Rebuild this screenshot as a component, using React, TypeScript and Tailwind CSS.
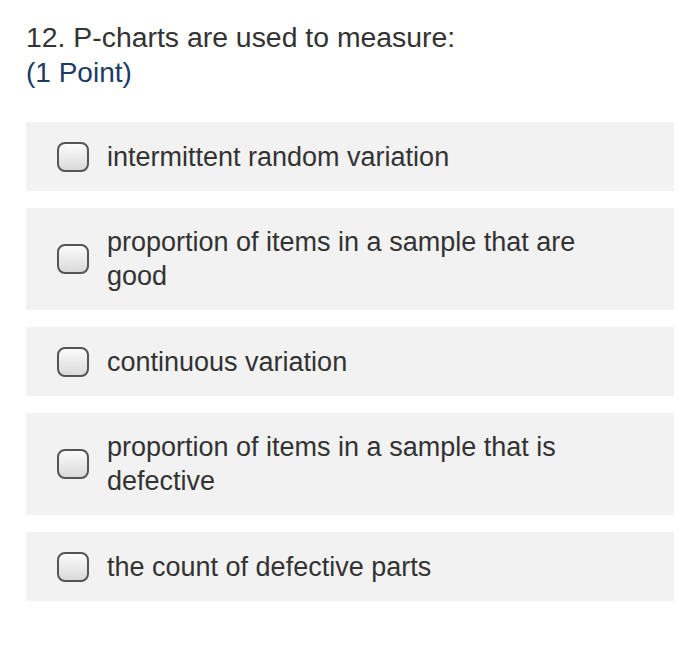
import React from "react";

const options = [
  "intermittent random variation",
  "proportion of items in a sample that are good",
  "continuous variation",
  "proportion of items in a sample that is defective",
  "the count of defective parts",
];

function Box() {
  return (
    <span className="shrink-0 w-[32px] h-[30px] rounded-[8px] border-2 border-[#555] bg-gradient-to-b from-[#fbfbfb] to-[#dadada]" />
  );
}

export default function App() {
  return (
    <div className="w-[700px] h-[646px] bg-white pl-[26px] pr-[26px] pt-[19px] text-[#333]" style={{ fontFamily: '"Liberation Sans", Arial, sans-serif' }}>
      <div className="text-[28.4px] leading-[36px]">12.&nbsp;P-charts are used to measure:</div>
      <div className="text-[28px] leading-[36px] text-[#1d3a63]">(1 Point)</div>
      <div className="mt-[31px] flex flex-col gap-[17px]">
        {options.map((o) => (
          <div key={o} className="bg-[#f2f2f2] flex items-center pl-[31px] pr-[40px] py-[17px] min-h-[69px]">
            <Box />
            <span className="ml-[18px] text-[27px] leading-[34px] w-[490px]">{o}</span>
          </div>
        ))}
      </div>
    </div>
  );
}
